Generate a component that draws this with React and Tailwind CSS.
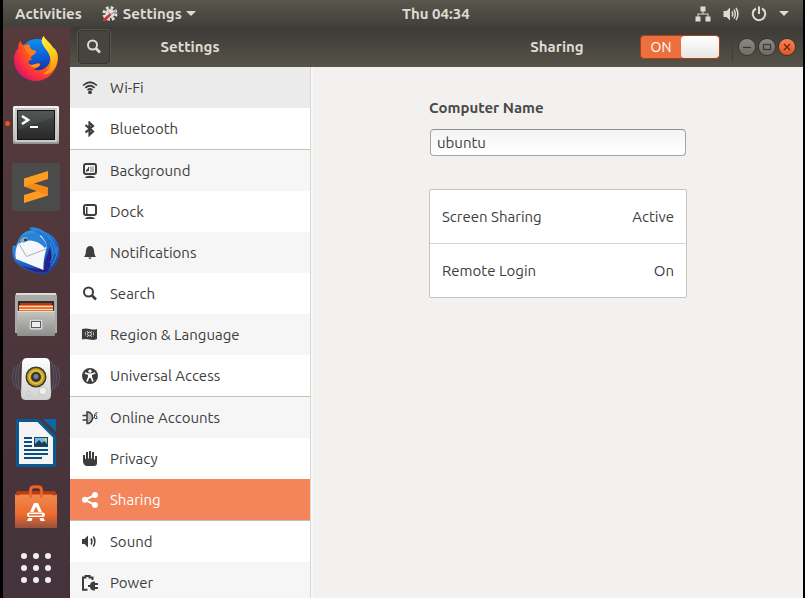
import React from "react";

const FirefoxIcon = () => (
  <svg viewBox="0 0 48 48" className="size-12" aria-hidden="true">
    <defs>
      <radialGradient id="ffBody" cx="0.85" cy="0.15" r="1.05">
        <stop offset="0" stopColor="#ffe226" />
        <stop offset="0.3" stopColor="#ffb016" />
        <stop offset="0.58" stopColor="#ff5a1f" />
        <stop offset="0.82" stopColor="#f8264a" />
        <stop offset="1" stopColor="#c4137c" />
      </radialGradient>
      <linearGradient id="ffGlobe" x1="0.5" y1="0" x2="0.6" y2="1">
        <stop offset="0" stopColor="#0f8ff0" />
        <stop offset="0.5" stopColor="#0a5fd6" />
        <stop offset="1" stopColor="#2a1f86" />
      </linearGradient>
      <linearGradient id="ffTail" x1="0" y1="0" x2="0.2" y2="1">
        <stop offset="0" stopColor="#fff04a" />
        <stop offset="0.5" stopColor="#ffd21c" />
        <stop offset="1" stopColor="#ff9a12" />
      </linearGradient>
    </defs>
    <circle cx="25" cy="22" r="18" fill="url(#ffGlobe)" />
    <path d="M8.500 5.500C9 8 10 9.500 12 10.500C14 9.500 16 9.500 18 10C17.500 12 18 13 19.500 14.500C21 15.500 23 15.500 24 16C24 18 22 19.500 20 20.500C18.500 22 18.800 24 20 25C17 25 15.500 27 17.500 29C20 31.500 22.500 28.500 26 28.500C27.500 28.500 28.500 29 28 30C26.500 32 24 34 21 34C28 37.500 36.500 33 38 26C39.500 20 35 13 31.500 10C29 7 29.500 4 31.500 1C33 4.500 38 7.500 41 12.500C45 14.500 47 21 45.500 27C43.500 38 34.500 46 24 46C12 46 2 36.500 2 24.500C2 20 3.500 16 6 13.500C6 10.500 7 7.500 8.500 5.500Z" fill="url(#ffBody)" />
    <path d="M31.500 1C33 4.500 38 7.500 40.500 12C45 17 46.500 23 44.500 29C42 37 35 40 31 39C37 36 40.500 30 38.500 23C37 17 33 14 31 10C29 7 29.500 4 31.500 1Z" fill="url(#ffTail)" />
    <path d="M12 10.500C14 9.500 16 9.500 18 10C17.500 12 18 13 19.500 14.500C21 15.500 23 15.500 24 16C24 18 22 19.500 20 20.500C17 20 14 18 12 10.500Z" fill="#ff7a1a" />
    <path d="M17 28.800C20 31.500 22.500 28.500 26 28.500C27.500 28.500 28.500 29 28 30C26 33 20 34 17 28.800Z" fill="#ff9a1a" />
  </svg>
);

const TerminalIcon = () => (
  <svg viewBox="0 0 48 48" className="size-12" aria-hidden="true">
    <defs>
      <linearGradient id="tmFrame" x1="0" y1="0" x2="0" y2="1">
        <stop offset="0" stopColor="#f4f4f2" />
        <stop offset="0.9" stopColor="#b9b9b6" />
        <stop offset="1" stopColor="#8b8b88" />
      </linearGradient>
      <linearGradient id="tmScreen" x1="0" y1="0" x2="0" y2="1">
        <stop offset="0" stopColor="#4b4d4c" />
        <stop offset="1" stopColor="#272828" />
      </linearGradient>
    </defs>
    <rect x="1" y="7" width="46" height="38" rx="1.500" fill="url(#tmFrame)" />
    <rect x="3" y="9" width="42" height="34" fill="#c9cac8" />
    <rect x="5" y="11" width="38" height="30" fill="#151616" />
    <rect x="6" y="12" width="36" height="28" fill="url(#tmScreen)" />
    <path d="M6 12H42V18L6 31Z" fill="#fff" opacity="0.060" />
    <path d="M10 17L16 21L10 25" fill="none" stroke="#fff" strokeWidth="2.600" />
    <path d="M18 28H26" stroke="#fff" strokeWidth="2" />
  </svg>
);

const SublimeIcon = () => (
  <svg viewBox="0 0 48 48" className="size-12" aria-hidden="true">
    <rect width="48" height="48" rx="2" fill="#4b4b4b" />
    <path d="M12 15.500L36 8V16L22 20.500L36 24.500V32.500L12 40V32L25 28L12 23.500Z" fill="#ff9a22" />
    <path d="M12 23.500L22 20.500L36 24.500V32.500L25 28Z" fill="#e97f13" opacity="0.600" />
  </svg>
);

const ThunderbirdIcon = () => (
  <svg viewBox="0 0 48 48" className="size-12" aria-hidden="true">
    <defs>
      <linearGradient id="tbBody" x1="0.2" y1="0" x2="0.8" y2="1">
        <stop offset="0" stopColor="#3aa0e8" />
        <stop offset="0.5" stopColor="#1d6fd0" />
        <stop offset="1" stopColor="#1b3f9f" />
      </linearGradient>
    </defs>
    <path d="M17 1C22 -0.500 29 1.500 33 5C42 8 48 16 47.500 26C47 34 43 41 37 44C39 45 35 47.500 30 47C20 46 8 41 3 34C0 29 0 23 1 18C3 20 4 19 6 14C9 7 13 4 20 3Z" fill="url(#tbBody)" />
    <path d="M5 34C13 42 22 42 32 41L33 34L38 20L40 33L36 44C30 48 14 44 5 34Z" fill="#25218c" />
    <path d="M6.500 16L29 8.500C33 13 35.500 18 34.500 21C33 28 31 33 31.500 43L4 32C2.500 27 4 20 6.500 16Z" fill="#f6f7fa" />
    <path d="M6.500 16L14.500 29.500L34 22" fill="none" stroke="#a9afba" strokeWidth="1" />
    <path d="M6.500 16C7 9 14 5 23 7C28 8 32 12 35 19L33 21C28 16 24 14 18 13.500C12 14 9 16 6.500 16Z" fill="#2b83d8" />
    <path d="M8 14C10 10 13 9 16 11L12 16Z" fill="#8ba9bb" />
    <circle cx="13.500" cy="13" r="1.500" fill="#163563" />
    <path d="M36 10C42 15 44 20 43 27M38 16C42 22 42 30 38 36M45 20C46 27 43 34 39 39" fill="none" stroke="#3c9ce4" strokeWidth="0.900" />
    <path d="M17 1L31 8M23 1L36 12" stroke="#2566bb" strokeWidth="0.800" />
  </svg>
);

const FilesIcon = () => (
  <svg viewBox="0 0 48 48" className="size-12" aria-hidden="true">
    <defs>
      <linearGradient id="flFront" x1="0" y1="0" x2="0" y2="1">
        <stop offset="0" stopColor="#c4c4c3" />
        <stop offset="1" stopColor="#8d8d8c" />
      </linearGradient>
    </defs>
    <path d="M4.500 2H43.500L45 5V42H3V5Z" fill="#a9a9a8" />
    <path d="M4.500 2H43.500L44.500 4H3.500Z" fill="#dededd" />
    <rect x="6" y="10" width="36" height="12" fill="#2e2e2e" />
    <rect x="8" y="12" width="32" height="10" fill="#a94116" />
    <rect x="7" y="14" width="34" height="8" fill="#f0712c" />
    <path d="M7 15.500H41M7 18.500H41" stroke="#ffd9bf" strokeWidth="1" />
    <rect x="5" y="20" width="38" height="25" rx="1" fill="url(#flFront)" />
    <path d="M5 20.500H43" stroke="#dcdcdc" />
    <rect x="17" y="28" width="14" height="11" rx="2" fill="#d7d7d7" stroke="#a3a3a3" />
    <rect x="19.500" y="30.500" width="9" height="6" fill="#eee" stroke="#5b5b5b" />
  </svg>
);

const RhythmboxIcon = () => (
  <svg viewBox="0 0 48 48" className="size-12" aria-hidden="true">
    <defs>
      <linearGradient id="rbBody" x1="0" y1="0" x2="0" y2="1">
        <stop offset="0" stopColor="#ffffff" />
        <stop offset="1" stopColor="#cfcfcf" />
      </linearGradient>
    </defs>
    <g fill="none" stroke="#6484ad" strokeWidth="1" opacity="0.450">
      <path d="M6 9Q1 22 6 35M3 12Q-2 22 3 32M9 6Q3 22 9 38M42 9Q47 22 42 35M45 12Q50 22 45 32M39 6Q45 22 39 38" />
    </g>
    <path d="M15 3H33Q37.500 3 38 8L39 40Q39 45 34 45H14Q9 45 9 40L10 8Q10.500 3 15 3Z" fill="url(#rbBody)" />
    <circle cx="24" cy="22" r="10.500" fill="#3b3b36" />
    <circle cx="24" cy="22" r="9" fill="#c79f12" />
    <circle cx="24" cy="22" r="6.500" fill="none" stroke="#e3c040" strokeWidth="1.500" />
    <circle cx="24" cy="22" r="5" fill="#33353b" />
    <circle cx="24" cy="21.500" r="2.500" fill="#77808e" />
    <circle cx="31" cy="36" r="4" fill="#efefef" stroke="#c6c6c6" />
    <rect x="14.500" y="36.500" width="4" height="4" fill="none" stroke="#ccc" />
  </svg>
);

const WriterIcon = () => (
  <svg viewBox="0 0 48 48" className="size-12" aria-hidden="true">
    <path d="M6 0H27L44 17V46Q44 48 42 48H6Q4 48 4 46V2Q4 0 6 0Z" fill="#0a5a91" />
    <path d="M31 0H44V13Z" fill="#0a68a6" />
    <path d="M7 3H25.500L41 18.500V45H7Z" fill="#f4f4f4" />
    <path d="M12 19H20M12 23H20M12 27H20M12 31H36M12 35H36M12 39H30" stroke="#0a4e80" strokeWidth="2" />
    <rect x="22" y="18" width="14" height="10" fill="#0a4e80" />
    <rect x="23" y="19" width="12" height="8" fill="#79b8e2" />
    <path d="M23 27V25L27 21L30 24L32 22L35 25V27Z" fill="#223c4d" />
    <circle cx="33.500" cy="20.500" r="1.500" fill="#f2ca30" />
  </svg>
);

const SoftwareIcon = () => (
  <svg viewBox="0 0 48 48" className="size-12" aria-hidden="true">
    <defs>
      <linearGradient id="swBag" x1="0" y1="0" x2="0" y2="1">
        <stop offset="0" stopColor="#ef8a4e" />
        <stop offset="0.600" stopColor="#ee6a2e" />
        <stop offset="0.850" stopColor="#b95a38" />
        <stop offset="1" stopColor="#93513f" />
      </linearGradient>
    </defs>
    <path d="M5 8H43L45 12V15H3V12Z" fill="#bb3c13" />
    <path d="M18.500 13V7Q18.500 3.500 22 3.500H26Q29.500 3.500 29.500 7V13" fill="none" stroke="#c54416" strokeWidth="3" />
    <path d="M3 11.500L6 12.500L8 11.500H40L42 12.500L45 11.500V45H3Z" fill="url(#swBag)" />
    <path d="M18.500 15V8Q18.500 4 22 4H26Q29.500 4 29.500 8V15" fill="none" stroke="#eb642c" strokeWidth="2.500" />
    <path d="M22 20H26L30 29H26.500L24 23.500L21.500 29H18Z" fill="#fff" />
    <rect x="15" y="29.500" width="18" height="4.500" rx="2.200" fill="#fff" />
    <path d="M17 31.800H30" stroke="#ee7138" strokeWidth="1.600" />
    <path d="M16.500 35H20.500L19.500 38H15ZM27.500 35H31.500L33 38H28.500Z" fill="#fff" />
  </svg>
);

const AppsIcon = () => (
  <svg viewBox="0 0 48 48" className="size-12 fill-[#f0eeee]" aria-hidden="true">
    {[12, 24, 36].map((y) => [12, 24, 36].map((x) => <circle key={x + "-" + y} cx={x} cy={y} r="3" />))}
  </svg>
);

const Glyph = ({ children }) => (
  <svg viewBox="0 0 16 16" className="size-4 shrink-0" fill="currentColor" aria-hidden="true">
    {children}
  </svg>
);

const SearchGlyph = () => (
  <Glyph>
    <circle cx="6.500" cy="6" r="4.500" fill="none" stroke="currentColor" strokeWidth="2" />
    <path d="M9.500 9L14 13.500" stroke="currentColor" strokeWidth="2.600" />
  </Glyph>
);

const groups = [
  [
    {
      name: "Wi-Fi",
      tone: "bg-[#ebebeb]",
      icon: (
        <Glyph>
          <g fill="none" stroke="currentColor" strokeWidth="1.700">
            <path d="M1 5.500Q8 -1 15 5.500" />
            <path d="M3.300 7.800Q8 3.700 12.700 7.800" />
            <path d="M5.500 10Q8 8 10.500 10" />
          </g>
          <circle cx="8" cy="12.300" r="1.900" />
        </Glyph>
      ),
    },
    {
      name: "Bluetooth",
      tone: "bg-white",
      icon: (
        <Glyph>
          <path d="M3.500 4L11 10.500L7.500 13.800V1.700L11 5L3.500 11.500" fill="none" stroke="currentColor" strokeWidth="2.200" />
        </Glyph>
      ),
    },
  ],
  [
    {
      name: "Background",
      tone: "bg-[#f6f6f6]",
      icon: (
        <Glyph>
          <rect x="2" y="1" width="12" height="10" rx="2" fill="none" stroke="currentColor" strokeWidth="2" />
          <path d="M4 9V7.500L6 5V4H7V8H6Z" />
          <rect x="8" y="3.500" width="4" height="5.500" opacity="0.350" />
          <path d="M4 13.500Q8 11.800 12 13.500L13 15H3Z" />
        </Glyph>
      ),
    },
    {
      name: "Dock",
      tone: "bg-white",
      icon: (
        <Glyph>
          <rect x="2" y="1" width="12" height="10" rx="2" fill="none" stroke="currentColor" strokeWidth="2" />
          <rect x="4" y="3" width="1.500" height="7" />
          <path d="M4 13.500Q8 11.800 12 13.500L13 15H3Z" />
        </Glyph>
      ),
    },
    {
      name: "Notifications",
      tone: "bg-[#f6f6f6]",
      icon: (
        <Glyph>
          <path d="M8 1Q11.500 1 12 5.500Q12.200 10 14 12H2Q3.800 10 4 5.500Q4.500 1 8 1ZM6.500 12.500H9.500Q9.300 14 8 14Q6.700 14 6.500 12.500Z" />
        </Glyph>
      ),
    },
    { name: "Search", tone: "bg-white", icon: <SearchGlyph /> },
    {
      name: "Region & Language",
      tone: "bg-[#f6f6f6]",
      icon: (
        <Glyph>
          <path d="M0 2Q4 1 8 2T15 2V12Q11.500 13.500 7.500 12.500T0 12.500Z" />
          <g fill="none" stroke="#f6f6f6" strokeWidth="0.800">
            <circle cx="7.500" cy="7" r="1.900" />
            <path d="M5 4L6 5.500M10 4L9 5.500M5 10L6 8.700M10 10L9 8.700" />
            <path d="M3.500 5V8.500M11.500 5V8.500" opacity="0.700" />
          </g>
        </Glyph>
      ),
    },
    {
      name: "Universal Access",
      tone: "bg-white",
      icon: (
        <Glyph>
          <circle cx="8" cy="8" r="8" />
          <circle cx="8" cy="3.200" r="1.600" fill="#fff" />
          <path d="M2.800 5L6.800 6.300V9L5 13.500M13.200 5L9.200 6.300V9L11 13.500" fill="none" stroke="#fff" strokeWidth="1.600" />
          <path d="M6 5.500H10V10H6Z" fill="#fff" />
        </Glyph>
      ),
    },
  ],
  [
    {
      name: "Online Accounts",
      tone: "bg-[#f6f6f6]",
      icon: (
        <Glyph>
          <path d="M0.500 5.500H5M0.500 10H5" stroke="currentColor" strokeWidth="1.600" />
          <path d="M5 2H6.500Q10.500 3.500 10.500 7.500T6.500 13.500H5Z" fill="#b8b8b8" stroke="currentColor" strokeWidth="1.500" />
          <path d="M10.500 8H12.500V5Q12.500 3 15.500 2.500M15 4.500L13.500 5.500L15 7V8.500H13" fill="none" stroke="currentColor" strokeWidth="1" />
        </Glyph>
      ),
    },
    {
      name: "Privacy",
      tone: "bg-white",
      icon: (
        <Glyph>
          <path d="M1 4H3V8H4V1H6V7.500H7V0H9V7.500H10V1H12V8.500H13V5H15V12Q15 15 12 15H5Q2 15 1 11Z" />
        </Glyph>
      ),
    },
    {
      name: "Sharing",
      tone: "bg-[#f48459]",
      active: true,
      icon: (
        <Glyph>
          <path d="M13 3L3 7.800L13 13" fill="none" stroke="currentColor" strokeWidth="2" />
          <circle cx="13" cy="3" r="3" />
          <circle cx="3" cy="7.800" r="3" />
          <circle cx="13" cy="13" r="3" />
        </Glyph>
      ),
    },
  ],
  [
    {
      name: "Sound",
      tone: "bg-white",
      icon: (
        <Glyph>
          <path d="M0 5H2.500L6 1.500V13.500L2.500 10H0Z" />
          <path d="M9 4.500Q10.800 7.500 9 10.500M11.300 2.500Q14.500 7.500 11.300 12.500" fill="none" stroke="currentColor" strokeWidth="1.600" />
        </Glyph>
      ),
    },
    {
      name: "Power",
      tone: "bg-[#f6f6f6]",
      icon: (
        <Glyph>
          <path d="M5.500 14.800H1V2.500H3.500V1H7.500V2.500H10.500V5" fill="none" stroke="currentColor" strokeWidth="2" />
          <path d="M6 10H8Q8.500 6.500 12 6.500H13V8H16V10H13V12H16V14H13V15.500H12Q8.500 15.500 8 12H6Z" />
        </Glyph>
      ),
    },
  ],
];

const dock = [
  { name: "Firefox", icon: <FirefoxIcon /> },
  { name: "Terminal", icon: <TerminalIcon />, running: true },
  { name: "Sublime Text", icon: <SublimeIcon /> },
  { name: "Thunderbird", icon: <ThunderbirdIcon /> },
  { name: "Files", icon: <FilesIcon /> },
  { name: "Rhythmbox", icon: <RhythmboxIcon /> },
  { name: "LibreOffice Writer", icon: <WriterIcon /> },
  { name: "Ubuntu Software", icon: <SoftwareIcon /> },
];

const Caret = () => (
  <svg viewBox="0 0 10 5" className="h-[5px] w-[10px]" fill="currentColor" aria-hidden="true">
    <path d="M0 0H10L5 5Z" />
  </svg>
);

function TopBar() {
  return (
    <header className="flex h-[27px] items-center bg-linear-to-b from-[#59574d] to-[#403f3a] pr-3.5 pl-3 font-bold text-[#dfdbd2]">
      <div className="flex w-1/2 items-center gap-5">
        <button type="button">Activities</button>
        <button type="button" className="flex items-center gap-1">
          <svg viewBox="0 0 16 16" className="size-4" aria-hidden="true">
            <circle cx="8" cy="7.500" r="4.500" fill="#e4e1dc" />
            <circle cx="8" cy="7.500" r="6" fill="none" stroke="#e4e1dc" strokeWidth="3" strokeDasharray="2.700 2.010" />
            <path d="M1 15L3.500 15L9.500 9L8 7L1 13Z" fill="#d2323a" />
            <path d="M6 5.500L8.500 8.500L12 6.500L14 4" fill="none" stroke="#8e8b86" strokeWidth="1" />
          </svg>
          <span className="pl-px">Settings</span>
          <Caret />
        </button>
      </div>
      <time>Thu 04:34</time>
      <div className="ml-auto flex items-center gap-3">
        <svg viewBox="0 0 16 16" className="size-4" fill="currentColor" aria-hidden="true">
          <path d="M5.500 0.500H10.500V5.500H8.500V7.500H13.500V10.500H15.500V15.500H10.500V10.500H12.500V8.500H3.500V10.500H5.500V15.500H0.500V10.500H2.500V7.500H7.500V5.500H5.500Z" />
        </svg>
        <svg viewBox="0 0 16 16" className="size-4" fill="currentColor" aria-hidden="true">
          <path d="M0.500 5H3.500L7 1.500V14.500L3.500 11H0.500Z" />
          <path d="M9 5.500Q10.500 8 9 10.500M11 3.500Q13.500 8 11 12.500M13 2Q16.800 8 13 14" fill="none" stroke="currentColor" strokeWidth="1.500" />
        </svg>
        <svg viewBox="0 0 16 16" className="size-4" fill="none" stroke="currentColor" strokeWidth="2" aria-hidden="true">
          <path d="M5 2.500A6.200 6.200 0 1 0 11 2.500M8 0.500V8" />
        </svg>
        <Caret />
      </div>
    </header>
  );
}

function WindowButton({ label, close, children }) {
  const tone = close
    ? "bg-linear-to-b from-[#f58457] to-[#e2541f] text-[#6b2409]"
    : "bg-linear-to-b from-[#8b8982] to-[#6f6d66] text-[#3a3935]";
  return (
    <button
      type="button"
      aria-label={label}
      className={"flex size-4 items-center justify-center rounded-full shadow-[0_0_0_1px_#35342f] " + tone}
    >
      <svg viewBox="0 0 16 16" className="size-4" fill="none" stroke="currentColor" strokeWidth="1.200" aria-hidden="true">
        {children}
      </svg>
    </button>
  );
}

function TitleBar() {
  return (
    <div className="flex h-10 bg-linear-to-b from-[#3b3a36] to-[#57534a] font-bold text-[#dfdbd2]">
      <div className="grid w-60 shrink-0 grid-cols-[1fr_auto_1fr] items-center px-2">
        <button
          type="button"
          aria-label="Search settings"
          className="flex h-[34px] w-8 items-center justify-center rounded border border-[#35342f] bg-[#45443e] shadow-[0_0_0_1px_#57554c]"
        >
          <SearchGlyph />
        </button>
        <h1>Settings</h1>
      </div>
      <div className="ml-px grid flex-1 grid-cols-[1fr_auto_1fr] items-center px-2">
        <h2 className="col-start-2">Sharing</h2>
        <div className="flex items-center justify-end">
          <label className="flex h-6 w-20 cursor-pointer overflow-hidden rounded border border-[#a5421b] bg-[#ee6f3e]">
            <input type="checkbox" role="switch" defaultChecked aria-label="Sharing" className="sr-only" />
            <span className="flex flex-1 items-center justify-center text-sm font-normal text-white">ON</span>
            <span className="w-[38px] rounded bg-linear-to-b from-white to-[#e8e6e3]" />
          </label>
          <span className="mr-1.5 ml-3 h-7 w-px bg-[#3f3e39]" />
          <div className="flex gap-1">
            <WindowButton label="Minimize">
              <path d="M4 8.500H12" />
            </WindowButton>
            <WindowButton label="Maximize">
              <rect x="4.500" y="5.500" width="7" height="5" />
            </WindowButton>
            <WindowButton label="Close" close>
              <path d="M5 5L11 11M11 5L5 11" />
            </WindowButton>
          </div>
        </div>
      </div>
    </div>
  );
}

function Sidebar() {
  return (
    <nav className="w-[241px] shrink-0 divide-y divide-[#c4c1bd] border-r border-[#dad7d3] bg-white text-[#3d3d3d]">
      {groups.map((items, i) => (
        <ul key={i}>
          {items.map((item) => (
            <li key={item.name}>
              <button
                type="button"
                aria-current={item.active ? "page" : undefined}
                className={"flex h-[41px] w-full items-center gap-3 px-3 text-left " + item.tone + (item.active ? " text-white" : "")}
              >
                {item.icon}
                <span>{item.name}</span>
              </button>
            </li>
          ))}
        </ul>
      ))}
    </nav>
  );
}

function SharingPanel() {
  return (
    <main className="flex-1 border-l-2 border-[#f8f7f6] bg-[#f2f1ef] pt-[31px] text-[#3d3d3d]">
      <div className="mx-auto w-full max-w-[258px]">
        <label htmlFor="computer-name" className="block font-bold text-[#4a4a4a]">
          Computer Name
        </label>
        <div className="mt-[11px] px-px">
          <input
            id="computer-name"
            type="text"
            defaultValue="ubuntu"
            className="block h-[27px] w-full rounded border border-[#a6a5a3] border-t-[#8e8f91] bg-linear-to-b from-[#f4f4f4] to-white px-1.5"
          />
        </div>
        <ul className="mt-[33px] divide-y divide-[#d8d6d3] rounded-xs border border-[#c6c4c1] bg-white">
          <li>
            <button type="button" className="flex h-[53px] w-full items-center justify-between px-3">
              <span>Screen Sharing</span>
              <span>Active</span>
            </button>
          </li>
          <li>
            <button type="button" className="flex h-[53px] w-full items-center justify-between px-3">
              <span>Remote Login</span>
              <span>On</span>
            </button>
          </li>
        </ul>
      </div>
    </main>
  );
}

export default function App() {
  return (
    <div className="flex h-screen flex-col overflow-hidden border-r-2 border-l-3 border-black bg-black font-['Ubuntu','Noto_Sans',sans-serif] text-[15px]/5">
      <TopBar />
      <div className="flex min-h-0 flex-1">
        <aside className="w-[67px] shrink-0 bg-linear-to-b from-[#563a3c] to-[#44333b]">
          {dock.map((app) => (
            <button key={app.name} type="button" aria-label={app.name} className="flex h-16 w-full items-center gap-0.5 pl-0.5">
              <span className={"size-[5px] rounded-full " + (app.running ? "bg-[#e95420]" : "")} />
              {app.icon}
            </button>
          ))}
          <button type="button" aria-label="Show Applications" className="flex h-[58px] w-full items-center pl-[9px]">
            <AppsIcon />
          </button>
        </aside>
        <div className="flex min-w-0 flex-1 flex-col">
          <TitleBar />
          <div className="flex min-h-0 flex-1">
            <Sidebar />
            <SharingPanel />
          </div>
        </div>
      </div>
    </div>
  );
}
